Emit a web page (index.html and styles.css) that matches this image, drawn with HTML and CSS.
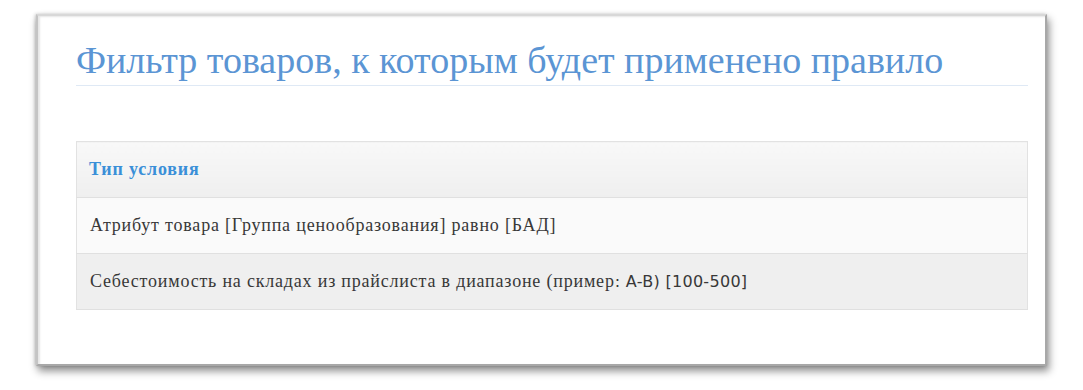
FILE: index.html
```html
<!DOCTYPE html>
<html lang="ru">
<head>
<meta charset="utf-8">
<link rel="stylesheet" href="styles.css">
</head>
<body>
<div class="card">
  <h1 class="title">Фильтр товаров, к которым будет применено правило</h1>
  <table class="conds">
    <thead>
      <tr><th>Тип условия</th></tr>
    </thead>
    <tbody>
      <tr class="odd"><td>Атрибут товара [Группа ценообразования] равно [БАД]</td></tr>
      <tr class="even"><td>Себестоимость на складах из прайслиста в диапазоне (пример<span class="lat">: A-B) [100-500]</span></td></tr>
    </tbody>
  </table>
</div>
</body>
</html>
```

FILE: styles.css
```css
html, body {
  margin: 0;
  background: #ffffff;
}
body {
  box-sizing: border-box;
  min-height: 390px;
  padding: 14px 0 0 36px;
  font-family: "Liberation Serif", "Times New Roman", serif;
}
.card {
  box-sizing: border-box;
  width: 1011px;
  height: 352px;
  background: #fff;
  border: 2px solid #a8a8a8;
  border-top-color: #d8d8d8;
  border-left-color: #c4c4c4;
  box-shadow: 2px 5px 8px rgba(0,0,0,0.45), -1px 0 3px rgba(0,0,0,0.18), inset 2px 1px 2px #e6e6e6;
  padding: 22px 17px 0 38px;
}
.title {
  margin: 0;
  font-weight: normal;
  font-size: 38px;
  line-height: 44px;
  color: #5b95d4;
  padding-bottom: 3px;
  border-bottom: 1px solid #dfe9f5;
}
.conds {
  margin-top: 55px;
  width: 100%;
  border-collapse: collapse;
  border: 1px solid #e2e2e2;
}
.conds th {
  text-align: left;
  font-weight: bold;
  font-size: 18px;
  letter-spacing: 0.8px;
  color: #3a8fd8;
  height: 55px;
  padding: 0 12px;
  background: linear-gradient(#f8f8f8, #efefef);
  border-bottom: 1px solid #e0e0e0;
}
.conds td {
  font-size: 18px;
  letter-spacing: 0.8px;
  color: #383838;
  height: 55px;
  padding: 0 13px;
  border-bottom: 1px solid #e0e0e0;
}
.conds tr.odd td { background: #fafafa; }
.conds tr.even td { background: #efefef; }
.lat {
  font-family: "DejaVu Sans", "Liberation Sans", sans-serif;
  font-size: 16px;
  letter-spacing: 0.3px;
}
```
